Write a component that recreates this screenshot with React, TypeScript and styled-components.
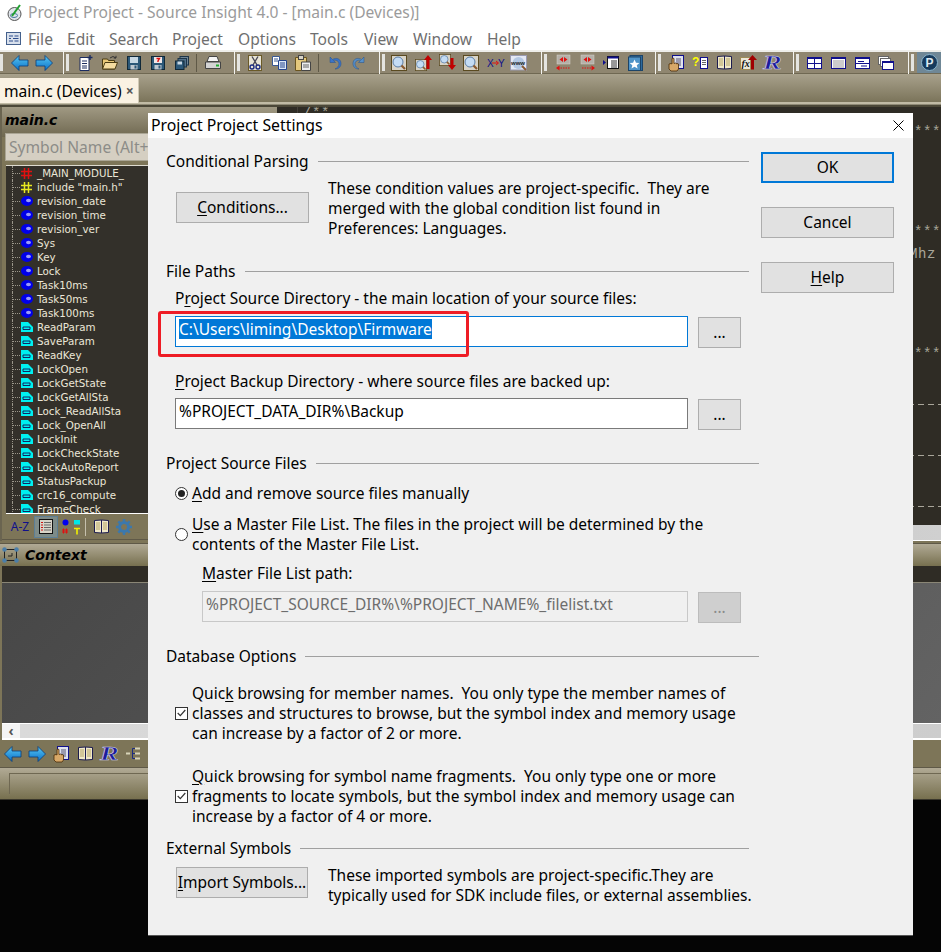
import React from "react";
import styled, { createGlobalStyle } from "styled-components";

const Global = createGlobalStyle`
  html, body { margin: 0; padding: 0; background: #050505; }
  * { box-sizing: border-box; }
`;

const UI = `"Noto Sans", "Open Sans", sans-serif`;

const Page = styled.div`
  position: relative; width: 941px; height: 952px; overflow: hidden;
  background: #050505; font-family: ${UI}; display: flex; flex-direction: column;
`;
const TitleBar = styled.div`
  height: 24px; background: #fff; display: flex; align-items: center; gap: 5px; padding: 0 0 0 7px;
  color: #9b9b9b; font-size: 15.6px; flex: none;
`;
const MenuBar = styled.div`
  height: 26px; background: #fff; display: flex; align-items: center; padding: 3px 0 0 6px; color: #6f6f6f;
  font-size: 15.6px; flex: none;
`;
const MenuItem = styled.span<{ $w: number }>`
  width: ${p => p.$w}px; flex: none;
`;
const Toolbar = styled.div`
  height: 24px; flex: none; display: flex; align-items: center; background: #8f8670;
  border-top: 2px solid #eeeeea; border-bottom: 1px solid #6f6852;
`;
const Grip = styled.span<{ $ml?: number }>`
  position: relative; flex: none; width: 3px; height: 17px; margin-left: ${p => p.$ml ?? 0}px;
  background: #e4e4e0;
  &::before { content: ""; position: absolute; left: -3px; top: -3px; bottom: -3px; width: 1px; background: #f4f4f0; }
`;
const Slot = styled.span<{ $ml?: number; $w?: number }>`
  flex: none; width: ${p => p.$w ?? 24}px; height: 20px; margin-left: ${p => p.$ml ?? 0}px;
  display: flex; align-items: center; justify-content: center;
`;
const ThinSep = styled.span<{ $ml: number }>`
  flex: none; width: 1px; height: 18px; background: #5f5947; margin-left: ${p => p.$ml}px;
`;
const PButton = styled.span`
  flex: none; width: 24px; height: 21px; margin-left: 3px; background: #6f8796; display: flex;
  align-items: center; justify-content: center;
`;
const TabStrip = styled.div`
  height: 33px; flex: none; padding-top: 4px;
  background: linear-gradient(180deg, #a8a18c 0%, #7b745a 85%, #c1bba5 86%, #c1bba5 92%, #4c4838 93%);
`;
const Tab = styled.div`
  width: 139px; height: 25px; background: #faf2e3; display: flex; align-items: center; padding-left: 4px;
  color: #000; font-size: 15.6px; gap: 4px; border-right: 1px solid #cfc8b4;
`;
const TabClose = styled.span`
  font-size: 14px; color: #555; font-weight: 700;
`;
const Upper = styled.div`
  height: 434px; flex: none; display: flex; background: #2f2c25;
`;
const SymbolPanel = styled.div`
  width: 277px; flex: none; display: flex; flex-direction: column;
  background: linear-gradient(180deg, #a09983, #6f6850 30px, #7d7558 30px);
  border-left: 2px solid #6a6450;
`;
const PanelTitle = styled.div`
  height: 26px; flex: none; padding-left: 3px; display: flex; align-items: center;
  font-family: "DejaVu Sans", sans-serif; font-weight: 700; font-style: italic; font-size: 14px; color: #000;
  gap: 5px;
`;
const SymbolSearch = styled.div`
  height: 28px; flex: none; margin-left: 3px; background: #d5cfc2; border: 1px solid #aaa594;
  color: #8c8c88; font-size: 15.6px; padding-left: 3px; display: flex; align-items: center; white-space: nowrap;
`;
const SymbolList = styled.div`
  height: 349px; flex: none; margin: 4px 0 0 4px; background: #33302a; border-top: 1px solid #dedbd0;
  border-bottom: 1px solid #fff; overflow: hidden;
`;
const SymbolRow = styled.div`
  height: 14px; display: flex; align-items: center; padding-left: 6px; flex: none;
  font-family: "DejaVu Sans", sans-serif; font-size: 10.3px; color: #ebe7d8; white-space: nowrap;
`;
const Branch = styled.span`
  flex: none; width: 9px; height: 14px; border-left: 1px dotted #9a968a;
  background: repeating-linear-gradient(90deg, #9a968a 0 1px, transparent 1px 2px) center / 100% 1px no-repeat;
`;
const SymbolIconBox = styled.span`
  flex: none; width: 16px; height: 12px; display: flex; align-items: center; justify-content: flex-start;
`;
const PanelTools = styled.div`
  height: 26px; flex: none; display: flex; align-items: center; border-bottom: 1px solid #5f5947; padding-left: 6px;
`;
const AZ = styled.span`
  width: 24px; color: #10108c; font-size: 12px; flex: none; text-align: center; margin-right: 2px;
`;
const ActiveTool = styled.span`
  width: 24px; height: 22px; background: #7d8b88; border: 1px solid #5d7f96; flex: none;
  display: flex; align-items: center; justify-content: center; margin-right: 4px;
`;
const SmallSep = styled.span`
  width: 1px; height: 18px; background: #c5c0ad; flex: none; margin: 0 4px 0 3px;
`;
const Editor = styled.div`
  flex: 1; min-width: 0; margin-left: 20px; display: flex; flex-direction: column; overflow: hidden;
  background: #2f2c25; border-left: 1px solid #44403a;
`;
const CodeLine = styled.div<{ $mt: number; $pr?: number }>`
  height: 14px; margin-top: ${p => p.$mt}px; padding-right: ${p => p.$pr ?? 0}px; display: flex; justify-content: flex-end; align-items: center;
  font-family: "Liberation Mono", monospace; font-size: 14px; color: #a9a69a; white-space: nowrap; letter-spacing: 0.6px; flex: none;
`;
const CodeStart = styled(CodeLine)`
  justify-content: flex-start; align-items: flex-start; height: 6px; line-height: 12px; overflow: hidden; padding-left: 5px;
`;
const DashLine = styled.div<{ $mt: number }>`
  height: 1px; flex: none; margin-top: ${p => p.$mt}px;
  background: repeating-linear-gradient(90deg, #a9a69a 0 6px, transparent 6px 10px);
`;
const EditorScroll = styled.div`
  height: 16px; margin-top: auto; flex: none; background: linear-gradient(90deg, #bbb, #d0d0d0); border-bottom: 1px solid #fff;
`;
const ContextBlock = styled.div`
  height: 259px; flex: none; display: flex; flex-direction: column; background: #7d7558;
`;
const ContextHeader = styled.div`
  height: 23px; flex: none; margin-top: 2px; border-top: 1px solid #5f5947; display: flex; align-items: center; gap: 6px; padding-left: 2px;
  background: linear-gradient(180deg, #b1aa95, #77704f);
  font-family: "DejaVu Sans", sans-serif; font-weight: 700; font-style: italic; font-size: 14px; color: #000;
`;
const ContextBand = styled.div`
  height: 17px; flex: none; margin-left: 2px; background: #2f2c25; border-bottom: 1px solid #8a8676;
`;
const ContextBody = styled.div`
  height: 140px; flex: none; margin-left: 2px; background: linear-gradient(135deg, #474747, #636363);
`;
const HScroll = styled.div`
  height: 17px; flex: none; margin-left: 2px; background: #fff; border-top: 1px solid #fff; border-bottom: 2px solid #fff;
  display: flex; align-items: stretch;
`;
const HScrollButton = styled.span`
  width: 18px; flex: none; background: #f4f4f4; color: #555; font-size: 14px; font-weight: 700; display: flex;
  align-items: center; justify-content: center; line-height: 1;
`;
const HScrollTrack = styled.span`
  flex: 1; background: linear-gradient(90deg, #dadada, #cdcdcd);
`;
const ContextTools = styled.div`
  height: 28px; flex: none; display: flex; align-items: center; padding-left: 1px; border-bottom: 1px solid #5f5947;
`;
const StatusBar = styled.div`
  flex: 1; background: linear-gradient(180deg, #b1aa95, #77704f); padding: 5px 0 0 9px;
  border-bottom: 1px solid #3a372c;
`;
const StatusInset = styled.div`
  height: 21px; border-left: 1px solid #6f6852; border-top: 1px solid #6f6852;
`;

/* Dialog */
const Dialog = styled.div`
  position: absolute; left: 148px; top: 113px; width: 765px; height: 823px; background: #f0f0f0;
  border-bottom: 1px solid #555; color: #000; font-size: 15.5px; line-height: 20px;
`;
const DialogTitle = styled.div`
  height: 25px; background: #fff; display: flex; align-items: center; justify-content: space-between;
  padding: 0 9px 0 3px; font-size: 15.8px;
`;
const TitleText = styled.span`
  padding-bottom: 1px;
`;
const DialogBody = styled.div`
  display: grid; grid-template-columns: 613px 133px; height: 797px;
`;
const Main = styled.div`
  padding: 13px 0 0 18px; display: flex; flex-direction: column;
`;
const Actions = styled.div`
  display: flex; flex-direction: column; gap: 24px; padding-top: 14px;
`;
const ActionButton = styled.div<{ $primary?: boolean }>`
  height: 31px; background: #e1e1e1; border: ${p => (p.$primary ? "2px solid #0078d7" : "1px solid #adadad")};
  display: flex; align-items: center; justify-content: center; padding-bottom: 2px;
`;
const GroupHead = styled.div<{ $mt: number; $lineEnd: number }>`
  display: flex; align-items: center; height: 20px; margin-top: ${p => p.$mt}px; flex: none;
  width: ${p => p.$lineEnd}px; gap: 9px; white-space: nowrap;
  &::after { content: ""; flex: 1; height: 1px; background: #a0a0a0; }
`;
const InfoRow = styled.div<{ $mt: number }>`
  display: grid; grid-template-columns: 162px 1fr; margin-top: ${p => p.$mt}px; flex: none;
`;
const PlainButton = styled.div<{ $w: number; $mt: number }>`
  width: ${p => p.$w}px; height: 31px; margin: ${p => p.$mt}px 0 0 10px; padding-bottom: 2px;
  background: #e1e1e1; border: 1px solid #adadad; display: flex; align-items: center; justify-content: center;
`;
const Para = styled.div`
  white-space: pre;
`;
const Label = styled.div<{ $mt: number; $ml: number }>`
  margin: ${p => p.$mt}px 0 0 ${p => p.$ml}px; height: 20px; flex: none; white-space: nowrap;
`;
const PathRow = styled.div<{ $mt: number; $ml: number }>`
  display: flex; margin: ${p => p.$mt}px 0 0 ${p => p.$ml}px; flex: none; gap: 10px;
`;
const PathInput = styled.div<{ $w: number; $state?: "focus" | "disabled" }>`
  width: ${p => p.$w}px; height: 31px; padding: 0 0 5px 3px; display: flex; align-items: center; white-space: nowrap;
  background: ${p => (p.$state === "disabled" ? "#f0f0f0" : "#fff")};
  color: ${p => (p.$state === "disabled" ? "#6d6d6d" : "#000")};
  border: 1px solid ${p => (p.$state === "focus" ? "#0078d7" : p.$state === "disabled" ? "#c8c8c8" : "#7a7a7a")};
`;
const Selected = styled.span`
  background: #0078d7; color: #fff; height: 20px; display: block; line-height: 20px;
`;
const BrowseButton = styled.div<{ $off?: boolean }>`
  width: 43px; height: 31px; margin-top: 1px; display: flex; align-items: center; justify-content: center; padding-bottom: 2px;
  background: ${p => (p.$off ? "#cfcfcf" : "#e1e1e1")}; border: 1px solid ${p => (p.$off ? "#bcbcbc" : "#adadad")};
  color: ${p => (p.$off ? "#8a8a8a" : "#000")};
`;
const OptionRow = styled.div<{ $mt: number }>`
  display: flex; align-items: center; margin: ${p => p.$mt}px 0 0 9px; flex: none; white-space: pre;
`;
const Radio = styled.span<{ $on?: boolean }>`
  flex: none; width: 13px; height: 13px; border-radius: 50%; border: 1px solid #333; background: #fff;
  margin-right: 4px; display: flex; align-items: center; justify-content: center;
  &::after { content: ""; width: 7px; height: 7px; border-radius: 50%; background: ${p => (p.$on ? "#222" : "transparent")}; }
`;
const Check = styled.span`
  flex: none; width: 13px; height: 13px; border: 1px solid #333; background: #fff; margin-right: 4px;
  display: flex; align-items: center; justify-content: center;
`;
const Key = styled.span`
  text-decoration: underline; text-underline-offset: 2px;
`;
const CloseX = styled.svg`
  width: 11px; height: 11px; display: block;
`;
const RedMark = styled.div`
  position: absolute; left: 158px; top: 311px; width: 311px; height: 46px; border: 3px solid #ee1c25; border-radius: 3px;
  pointer-events: none;
`;

/* Icons */
type IconName =
  | "left" | "right" | "newdoc" | "folder" | "save" | "savealert" | "saveall" | "print" | "cut" | "copy" | "paste"
  | "undo" | "redo" | "search" | "searchup" | "searchdown" | "xy" | "www" | "jumpl" | "jumpr" | "indent" | "star"
  | "hand" | "qdoc" | "book" | "fx" | "R" | "win4" | "winlines" | "winsplit" | "winstack" | "P" | "gear" | "symlist" | "kinds" | "tree" | "ctx" | "app" | "menuapp";

const Svg = styled.svg`
  display: block; flex: none; overflow: visible;
`;

const Mag = () => (
  <g>
    <rect x="0.5" y="0.5" width="15" height="15" fill="#d8d4c8" stroke="#5a4a20" />
    <circle cx="7" cy="7" r="5" fill="#c4dcf4" stroke="#5a7ea8" />
    <path d="M10.5 10.5 14 14" stroke="#8a5a30" strokeWidth="2.2" />
  </g>
);

const Icon = ({ name }: { name: IconName }) => {
  switch (name) {
    case "left":
    case "right":
      return (
        <Svg width="18" height="16" viewBox="0 0 18 16">
          <defs>
            <linearGradient id="ar" x1="0" y1="0" x2="0" y2="1">
              <stop offset="0" stopColor="#58c8f4" />
              <stop offset="1" stopColor="#0a70c8" />
            </linearGradient>
          </defs>
          <path
            d={name === "left" ? "M.5 8 8 .5V5h9v6H8v4.5Z" : "M17.5 8 10 .5V5H1v6h9v4.5Z"}
            fill="url(#ar)" stroke="#0a3c78" strokeWidth=".8"
          />
        </Svg>
      );
    case "newdoc":
      return (
        <Svg width="14" height="16" viewBox="0 0 14 16">
          <path d="M1 2.5h9v13H1z" fill="#fff" stroke="#1c2c60" />
          <path d="M3 6h5M3 8.5h5M3 11h5M3 13h5" stroke="#1c2c60" />
          <path d="M11 0v5M8.5 2.5h5" stroke="#1c2c60" strokeWidth="1.4" />
        </Svg>
      );
    case "folder":
      return (
        <Svg width="16" height="15" viewBox="0 0 16 15">
          <path d="M.5 14V4h5l1 1.5h6V14Z" fill="#e8c878" stroke="#4a3c14" />
          <path d="M.5 14 3 7.5h12.5L13 14Z" fill="#f4dca0" stroke="#4a3c14" />
          <path d="M8 3q3-3 6 0M14 3V.8M14 3h-2.2" fill="none" stroke="#333" />
        </Svg>
      );
    case "save":
    case "savealert":
      return (
        <Svg width="14" height="14" viewBox="0 0 14 14">
          <rect x=".5" y=".5" width="13" height="13" fill="#2c5878" stroke="#102838" />
          <rect x="3" y="1" width="8" height="6" fill={name === "save" ? "#c8d8e4" : "#f0e8e8"} />
          <rect x="3.5" y="9" width="7" height="4.5" fill="#c0c8d0" />
          <rect x="7.5" y="9.5" width="2" height="3" fill="#2c5878" />
          {name === "savealert" && <path d="M5.5 2.5h3L7 5v1" fill="none" stroke="#e01010" strokeWidth="1.4" />}
        </Svg>
      );
    case "saveall":
      return (
        <Svg width="14" height="14" viewBox="0 0 14 14">
          <rect x="5" y=".5" width="8.5" height="8.5" fill="#6f8494" stroke="#1c3448" />
          <rect x="3" y="2.5" width="8.5" height="8.5" fill="#50708a" stroke="#1c3448" />
          <rect x=".5" y="5" width="8.5" height="8.5" fill="#2c5878" stroke="#102838" />
          <rect x="2.5" y="5.5" width="4.5" height="3" fill="#c8d8e4" />
        </Svg>
      );
    case "print":
      return (
        <Svg width="16" height="14" viewBox="0 0 16 14">
          <path d="M4 .5h8l2 5H2Z" fill="#f4f4f4" stroke="#444" />
          <path d="M.5 6h15v6.5H.5Z" fill="#d4d4d4" stroke="#444" />
          <rect x="11" y="8.5" width="3" height="2" fill="#20b030" />
        </Svg>
      );
    case "cut":
      return (
        <Svg width="14" height="16" viewBox="0 0 14 16">
          <rect x=".5" y=".5" width="13" height="15" fill="#e8e4d4" stroke="#6a5a28" />
          <path d="M4 1.5 9 10M10 1.5 5 10" stroke="#445" strokeWidth="1.3" />
          <circle cx="4" cy="12" r="2" fill="none" stroke="#1c2c80" strokeWidth="1.4" />
          <circle cx="10" cy="12" r="2" fill="none" stroke="#1c2c80" strokeWidth="1.4" />
        </Svg>
      );
    case "copy":
      return (
        <Svg width="15" height="14" viewBox="0 0 15 14">
          <path d="M.5.5h7v9h-7z" fill="#fff" stroke="#3a5a94" />
          <path d="M2 3h4M2 5h4" stroke="#3a5a94" />
          <path d="M6.5 4.5h8v9h-8z" fill="#dce8f8" stroke="#24448c" />
          <path d="M8 7h5M8 9h5M8 11h5" stroke="#24448c" />
        </Svg>
      );
    case "paste":
      return (
        <Svg width="16" height="16" viewBox="0 0 16 16">
          <path d="M.5 2.5h11v13H.5z" fill="#e4c87c" stroke="#6a5420" />
          <rect x="3.5" y=".5" width="5" height="4" fill="#d8d4c8" stroke="#444" />
          <path d="M6.5 7h9v8.5h-9z" fill="#eee" stroke="#444" />
          <path d="M8 10h6M8 12h6" stroke="#666" />
        </Svg>
      );
    case "undo":
    case "redo":
      return (
        <Svg width="12" height="14" viewBox="0 0 12 14">
          <g transform={name === "redo" ? "translate(12 0) scale(-1 1)" : undefined}>
            <path d="M1 1v5.5h5.5L4.5 4.5C7 3.5 10 5 10 8c0 2.5-2 4-4 5 4 0 6-2.5 6-5.5C12 3 7.5 1 3.5 3.5Z" fill={name === "undo" ? "#3c74c8" : "#5890c8"} stroke="#24508c" strokeWidth=".5" />
          </g>
        </Svg>
      );
    case "search":
      return <Svg width="16" height="16" viewBox="0 0 16 16"><Mag /></Svg>;
    case "searchup":
      return (
        <Svg width="17" height="17" viewBox="0 0 17 17">
          <g transform="translate(0 5) scale(.75)"><Mag /></g>
          <path d="M13 1 17 6h-2.5v9h-3V6H9Z" fill="#c00000" />
        </Svg>
      );
    case "searchdown":
      return (
        <Svg width="17" height="17" viewBox="0 0 17 17">
          <g transform="scale(.75)"><Mag /></g>
          <path d="M13 16 17 11h-2.5V4h-3v7H9Z" fill="#c00000" />
        </Svg>
      );
    case "xy":
      return (
        <Svg width="17" height="12" viewBox="0 0 17 12">
          <text x="0" y="10" fontFamily="Liberation Sans" fontSize="10" fill="#10108c">X</text>
          <text x="11" y="10" fontFamily="Liberation Sans" fontSize="10" fill="#10108c">Y</text>
          <path d="M5 6h6M9 4l2.5 2L9 8" fill="none" stroke="#e01010" />
        </Svg>
      );
    case "www":
      return (
        <Svg width="18" height="16" viewBox="0 0 18 16">
          <rect x=".5" y=".5" width="16" height="14.5" fill="#e4e8f4" stroke="#9a9ab0" />
          <circle cx="8.5" cy="8" r="6" fill="#b4c8e4" />
          <text x="1" y="10" fontFamily="Liberation Sans" fontSize="6" fill="#222" fontWeight="700">www</text>
          <path d="M12 11 16 15" stroke="#8a5a30" strokeWidth="2" />
        </Svg>
      );
    case "jumpl":
    case "jumpr":
      return (
        <Svg width="15" height="16" viewBox="0 0 15 16">
          <rect x="1" y="0" width="13" height="9" fill="#b4b0a8" stroke="#d8d4cc" strokeWidth=".5" />
          <path d="M7 2 3.5 4.5 7 7ZM8 2l3.5 2.5L8 7Z" fill="#e01010" />
          <path d="M2 13h12" stroke="#e01010" strokeDasharray="1.5 1" />
          <path d={name === "jumpl" ? "M0 13l3.5-2.5v5Z" : "M15 13l-3.5-2.5v5Z"} fill="#e01010" />
        </Svg>
      );
    case "indent":
      return (
        <Svg width="16" height="13" viewBox="0 0 16 13">
          <path d="M0 4 3 6.5 0 9Z" fill="#10108c" />
          <rect x="4.5" y=".5" width="11" height="12" fill="#fff" stroke="#111" />
          <rect x="4.5" y=".5" width="11" height="2" fill="#10108c" />
          <path d="M8 5h6M8 7h6M8 9h6M8 11h6" stroke="#333" />
        </Svg>
      );
    case "star":
      return (
        <Svg width="15" height="16" viewBox="0 0 15 16">
          <rect x="2" y=".5" width="12.5" height="15" fill="#2e6a9c" stroke="#1c4468" />
          <rect x=".5" y="2" width="12" height="13.5" fill="#4f94c8" stroke="#1c4468" />
          <path d="M6.5 4.5 8 7.8l3.4.3-2.6 2.2.8 3.300-3.100-1.800-3 1.800.8-3.300L1.700 8.100 5.100 7.800Z" fill="#fff" />
        </Svg>
      );
    case "hand":
      return (
        <Svg width="16" height="16" viewBox="0 0 16 16">
          <rect x="4.5" y=".5" width="11" height="13" fill="#dfe2ee" stroke="#10108c" />
          <rect x="8" y="3" width="5" height="8" fill="#9a9ab0" />
          <path d="M1 9v5l2 2h6l1.5-2V9L9 8.5V9L7.5 8 6 8.5V3.5L4.5 3 4 4v5L3 8.5Z" fill="#d8a868" stroke="#4a2c08" strokeWidth=".8" />
        </Svg>
      );
    case "qdoc":
      return (
        <Svg width="16" height="13" viewBox="0 0 16 13">
          <text x="0" y="10" fontFamily="Liberation Sans" fontWeight="700" fontSize="12" fill="#ffff00">?</text>
          <rect x="8.5" y="1.5" width="7" height="11" fill="#fff" stroke="#10108c" />
          <path d="M10 4.5h4M10 6.5h4M10 8.5h4" stroke="#666" />
        </Svg>
      );
    case "book":
      return (
        <Svg width="15" height="15" viewBox="0 0 15 15">
          <path d="M.5 1.5 7.5 1l7 .5v12l-7 .5-7-.5Z" fill="#f0e8c8" stroke="#1c1c50" />
          <path d="M7.5 1v13" stroke="#1c1c50" />
          <path d="M2 4h4M2 6h4M2 8h4M2 10h4M9 4h4M9 6h4M9 8h4M9 10h4" stroke="#b4a468" />
        </Svg>
      );
    case "fx":
      return (
        <Svg width="17" height="15" viewBox="0 0 17 15">
          <rect x=".5" y="2.5" width="10" height="12" fill="#ece8d8" stroke="#a08c58" />
          <text x="1.5" y="12" fontFamily="Liberation Serif" fontStyle="italic" fontWeight="700" fontSize="10" fill="#111">fx</text>
          <path d="M12.5 0 17 5h-3v9.5h-3V5H8Z" fill="#a00000" />
        </Svg>
      );
    case "R":
      return (
        <Svg width="17" height="15" viewBox="0 0 17 15">
          <text transform="translate(-1 14) scale(1.55 1)" fontFamily="Liberation Serif" fontStyle="italic" fontWeight="700" fontSize="18" fill="#1c1c9c" stroke="#d4d4ea" strokeWidth=".5">R</text>
        </Svg>
      );
    case "win4":
      return (
        <Svg width="15" height="12" viewBox="0 0 15 12">
          <rect x=".5" y=".5" width="14" height="11" fill="#fff" stroke="#10108c" />
          <rect x=".5" y=".5" width="14" height="1.5" fill="#10108c" />
          <path d="M7.5 2v9M1 6.5h13" stroke="#10108c" />
        </Svg>
      );
    case "winlines":
      return (
        <Svg width="15" height="12" viewBox="0 0 15 12">
          <rect x=".5" y=".5" width="14" height="11" fill="#fff" stroke="#10108c" />
          <rect x=".5" y=".5" width="14" height="1.5" fill="#10108c" />
          <path d="M2 4h11M2 6h11M2 8h11M2 10h11" stroke="#999" />
        </Svg>
      );
    case "winsplit":
      return (
        <Svg width="15" height="12" viewBox="0 0 15 12">
          <rect x=".5" y=".5" width="14" height="11" fill="#fff" stroke="#10108c" />
          <rect x=".5" y=".5" width="14" height="1.5" fill="#10108c" />
          <path d="M1 6.5h13M3 4.5h6M6 9h6" stroke="#10108c" />
        </Svg>
      );
    case "winstack":
      return (
        <Svg width="16" height="14" viewBox="0 0 16 14">
          <rect x=".5" y=".5" width="10" height="8" fill="#fff" stroke="#666" />
          <rect x="2.5" y="2.5" width="10" height="8" fill="#fff" stroke="#666" />
          <rect x="4.5" y="5.5" width="11" height="8" fill="#fff" stroke="#10108c" />
          <rect x="4.5" y="5.5" width="11" height="1.5" fill="#10108c" />
        </Svg>
      );
    case "P":
      return (
        <Svg width="17" height="17" viewBox="0 0 17 17">
          <circle cx="8.5" cy="8.5" r="8" fill="#163a5c" stroke="#8ab4cc" />
          <text x="4.5" y="13" fontFamily="Liberation Sans" fontWeight="700" fontSize="12" fill="#dce8f0">P</text>
        </Svg>
      );
    case "gear":
      return (
        <Svg width="16" height="16" viewBox="0 0 16 16">
          <circle cx="8" cy="8" r="4.5" fill="none" stroke="#3c78ac" strokeWidth="3" />
          <path d="M8 0v3M8 13v3M0 8h3M13 8h3M2.3 2.3l2 2M11.7 11.7l2 2M2.3 13.7l2-2M11.7 4.3l2-2" stroke="#3c78ac" strokeWidth="2.5" />
        </Svg>
      );
    case "symlist":
      return (
        <Svg width="14" height="15" viewBox="0 0 14 15">
          <rect x=".5" y=".5" width="13" height="14" fill="#d8d4c8" stroke="#111" />
          <path d="M5 3.5h7M5 6h7M5 8.5h7M5 11h7" stroke="#666" />
          <path d="M2 3.5h2M2 6h2M2 8.5h2M2 11h2" stroke="#d01010" />
        </Svg>
      );
    case "kinds":
      return (
        <Svg width="20" height="16" viewBox="0 0 20 16">
          <circle cx="3.5" cy="3.5" r="3" fill="#0000f0" />
          <rect x="12" y="1" width="6" height="4.5" fill="#00e8e8" />
          <path d="M1.5 9.5v5M4.5 9.5v5M0 11h6M0 13h6" stroke="#e01010" />
          <path d="M12 9.5h6M15 9.5v6" stroke="#f0f000" strokeWidth="1.6" />
        </Svg>
      );
    case "tree":
      return (
        <Svg width="15" height="13" viewBox="0 0 15 13">
          <path d="M0 6.5h4M9 1.5h5M9 6.5h5M9 11.5h5" stroke="#d8d4b8" strokeWidth="2" />
          <path d="M6.5 1.5v10M6.5 1.5H9M6.5 6.5H9M6.5 11.5H9" fill="none" stroke="#1c2c80" />
        </Svg>
      );
    case "ctx":
      return (
        <Svg width="17" height="16" viewBox="0 0 17 16">
          <path d="M2.5 2.5h12v11h-12Z" fill="none" stroke="#222" />
          <path d="M6 9h4V6" fill="none" stroke="#222" />
          {[[2.5, 2.5], [14.5, 2.5], [2.5, 13.5], [14.5, 13.5]].map(([x, y]) => (
            <circle key={`${x}-${y}`} cx={x} cy={y} r="2.2" fill="#4b7ea8" />
          ))}
        </Svg>
      );
    case "app":
      return (
        <Svg width="16" height="17" viewBox="0 0 16 17">
          <circle cx="7.5" cy="10" r="6.5" fill="#dfe4ea" stroke="#555" />
          <ellipse cx="7" cy="11.5" rx="3.5" ry="2" fill="none" stroke="#4878a0" />
          <path d="M5 12 13 1" stroke="#20a030" strokeWidth="2" />
        </Svg>
      );
    case "menuapp":
      return (
        <Svg width="15" height="13" viewBox="0 0 15 13">
          <rect x=".5" y=".5" width="14" height="12" fill="#d8e0ec" stroke="#44608c" />
          <path d="M3 4h4M3 6.5h2M3 9h4M8.5 4h4M7 6.5h5.5M8.5 9h4" stroke="#2c4c8c" />
        </Svg>
      );
  }
};

const SymHash = ({ c }: { c: string }) => (
  <Svg width="11" height="11" viewBox="0 0 11 11">
    <path d="M3.5 0v11M7.5 0v11M0 3.5h11M0 7.5h11" stroke={c} strokeWidth="1.5" />
  </Svg>
);
const SymBall = () => (
  <Svg width="12" height="10" viewBox="0 0 12 10">
    <ellipse cx="6" cy="5" rx="6" ry="5" fill="#0000e8" />
    <ellipse cx="7.5" cy="4.5" rx="2.5" ry="1.8" fill="#9a9af8" />
  </Svg>
);
const SymFunc = () => (
  <Svg width="12" height="10" viewBox="0 0 12 10">
    <path d="M0 0h7l5 5v5H0Z" fill="#00f0f0" />
    <path d="M2 5h7v2.5H2Z" fill="none" stroke="#115" strokeWidth=".9" />
  </Svg>
);
const CheckMark = () => (
  <Svg width="9" height="8" viewBox="0 0 9 8">
    <path d="M.7 4 3.3 6.6 8.3 1" fill="none" stroke="#333" strokeWidth="1.2" />
  </Svg>
);

type Sym = [string, "red" | "yel" | "ball" | "func"];
const symbols: Sym[] = [
  ["_MAIN_MODULE_", "red"], ['include "main.h"', "yel"], ["revision_date", "ball"], ["revision_time", "ball"],
  ["revision_ver", "ball"], ["Sys", "ball"], ["Key", "ball"], ["Lock", "ball"], ["Task10ms", "ball"], ["Task50ms", "ball"],
  ["Task100ms", "ball"], ["ReadParam", "func"], ["SaveParam", "func"], ["ReadKey", "func"], ["LockOpen", "func"],
  ["LockGetState", "func"], ["LockGetAllSta", "func"], ["Lock_ReadAllSta", "func"], ["Lock_OpenAll", "func"], ["LockInit", "func"],
  ["LockCheckState", "func"], ["LockAutoReport", "func"], ["StatusPackup", "func"], ["crc16_compute", "func"], ["FrameCheck", "func"],
];

const menus: [string, number][] = [
  ["File", 39], ["Edit", 42], ["Search", 63], ["Project", 66], ["Options", 72], ["Tools", 54], ["View", 49], ["Window", 74], ["Help", 40],
];

export default function App() {
  return (
    <Page>
      <Global />
      <TitleBar>
        <Icon name="app" />
        <span>Project Project - Source Insight 4.0 - [main.c (Devices)]</span>
      </TitleBar>
      <MenuBar>
        <MenuItem $w={22}><Icon name="menuapp" /></MenuItem>
        {menus.map(([m, w]) => <MenuItem key={m} $w={w}>{m}</MenuItem>)}
      </MenuBar>
      <Toolbar>
        <Grip />
        <Slot $ml={5}><Icon name="left" /></Slot>
        <Slot><Icon name="right" /></Slot>
        <Grip $ml={10} />
        <Slot $ml={5}><Icon name="newdoc" /></Slot>
        <Slot><Icon name="folder" /></Slot>
        <Slot><Icon name="save" /></Slot>
        <Slot><Icon name="savealert" /></Slot>
        <Slot><Icon name="saveall" /></Slot>
        <ThinSep $ml={2} />
        <Slot $ml={4}><Icon name="print" /></Slot>
        <Grip $ml={12} />
        <Slot $ml={3}><Icon name="cut" /></Slot>
        <Slot><Icon name="copy" /></Slot>
        <Slot><Icon name="paste" /></Slot>
        <ThinSep $ml={3} />
        <Slot $ml={4}><Icon name="undo" /></Slot>
        <Slot><Icon name="redo" /></Slot>
        <Grip $ml={11} />
        <Slot $ml={2}><Icon name="search" /></Slot>
        <Slot><Icon name="searchup" /></Slot>
        <Slot><Icon name="searchdown" /></Slot>
        <Slot><Icon name="search" /></Slot>
        <Slot><Icon name="xy" /></Slot>
        <Slot><Icon name="www" /></Slot>
        <Grip $ml={13} />
        <Slot $ml={4}><Icon name="jumpl" /></Slot>
        <Slot><Icon name="jumpr" /></Slot>
        <Slot><Icon name="indent" /></Slot>
        <Slot><Icon name="star" /></Slot>
        <Grip $ml={11} />
        <Slot $ml={3}><Icon name="hand" /></Slot>
        <Slot><Icon name="qdoc" /></Slot>
        <Slot><Icon name="book" /></Slot>
        <Slot><Icon name="fx" /></Slot>
        <Slot><Icon name="R" /></Slot>
        <Grip $ml={12} />
        <Slot $ml={3}><Icon name="win4" /></Slot>
        <Slot><Icon name="winlines" /></Slot>
        <Slot><Icon name="winsplit" /></Slot>
        <Slot><Icon name="winstack" /></Slot>
        <Grip $ml={13} />
        <PButton><Icon name="P" /></PButton>
      </Toolbar>
      <TabStrip>
        <Tab>main.c (Devices) <TabClose>×</TabClose></Tab>
      </TabStrip>
      <Upper>
        <SymbolPanel>
          <PanelTitle>main.c</PanelTitle>
          <SymbolSearch>Symbol Name (Alt+L)</SymbolSearch>
          <SymbolList>
            {symbols.map(([s, k]) => (
              <SymbolRow key={s}>
                <Branch />
                <SymbolIconBox>
                  {k === "red" && <SymHash c="#e01010" />}
                  {k === "yel" && <SymHash c="#e8e820" />}
                  {k === "ball" && <SymBall />}
                  {k === "func" && <SymFunc />}
                </SymbolIconBox>
                {s}
              </SymbolRow>
            ))}
          </SymbolList>
          <PanelTools>
            <AZ>A-Z</AZ>
            <ActiveTool><Icon name="symlist" /></ActiveTool>
            <Icon name="kinds" />
            <SmallSep />
            <Slot $w={22}><Icon name="book" /></Slot>
            <Slot $w={24}><Icon name="gear" /></Slot>
          </PanelTools>
        </SymbolPanel>
        <Editor>
          <CodeStart $mt={0}>/**</CodeStart>
          <CodeLine $mt={12}>******</CodeLine>
          <CodeLine $mt={86}>******</CodeLine>
          <CodeLine $mt={8} $pr={5}>Mhz</CodeLine>
          <CodeLine $mt={86}>******</CodeLine>
          <DashLine $mt={43} />
          <DashLine $mt={50} />
          <DashLine $mt={50} />
          <EditorScroll />
        </Editor>
      </Upper>
      <ContextBlock>
        <ContextHeader><Icon name="ctx" />Context</ContextHeader>
        <ContextBand />
        <ContextBody />
        <HScroll>
          <HScrollButton>‹</HScrollButton>
          <HScrollTrack />
        </HScroll>
        <ContextTools>
          <Slot><Icon name="left" /></Slot>
          <Slot><Icon name="right" /></Slot>
          <Slot><Icon name="hand" /></Slot>
          <Slot><Icon name="book" /></Slot>
          <Slot><Icon name="R" /></Slot>
          <Slot><Icon name="tree" /></Slot>
        </ContextTools>
        <StatusBar><StatusInset /></StatusBar>
      </ContextBlock>

      <Dialog>
        <DialogTitle>
          <TitleText>Project Project Settings</TitleText>
          <CloseX viewBox="0 0 11 11"><path d="M.5.5l10 10M10.5.5l-10 10" stroke="#000" /></CloseX>
        </DialogTitle>
        <DialogBody>
          <Main>
            <GroupHead $mt={0} $lineEnd={583}>Conditional Parsing</GroupHead>
            <InfoRow $mt={7}>
              <PlainButton $w={133} $mt={14}><span><Key>C</Key>onditions...</span></PlainButton>
              <Para>
                These condition values are project-specific.  They are<br />
                merged with the global condition list found in<br />
                Preferences: Languages.
              </Para>
            </InfoRow>
            <GroupHead $mt={23} $lineEnd={583}>File Paths</GroupHead>
            <Label $mt={7} $ml={9}>P<Key>r</Key>oject Source Directory - the main location of your source files:</Label>
            <PathRow $mt={8} $ml={9}>
              <PathInput $w={513} $state="focus"><Selected>C:\Users\liming\Desktop\Firmware</Selected></PathInput>
              <BrowseButton>...</BrowseButton>
            </PathRow>
            <Label $mt={23} $ml={9}><Key>P</Key>roject Backup Directory - where source files are backed up:</Label>
            <PathRow $mt={7} $ml={9}>
              <PathInput $w={513}>%PROJECT_DATA_DIR%\Backup</PathInput>
              <BrowseButton>...</BrowseButton>
            </PathRow>
            <GroupHead $mt={23} $lineEnd={593}>Project Source Files</GroupHead>
            <OptionRow $mt={10}>
              <Radio $on />
              <span><Key>A</Key>dd and remove source files manually</span>
            </OptionRow>
            <OptionRow $mt={11}>
              <Radio />
              <span>
                <Key>U</Key>se a Master File List. The files in the project will be determined by the<br />
                contents of the Master File List.
              </span>
            </OptionRow>
            <Label $mt={9} $ml={36}><Key>M</Key>aster File List path:</Label>
            <PathRow $mt={8} $ml={36}>
              <PathInput $w={486} $state="disabled">%PROJECT_SOURCE_DIR%\%PROJECT_NAME%_filelist.txt</PathInput>
              <BrowseButton $off>...</BrowseButton>
            </PathRow>
            <GroupHead $mt={23} $lineEnd={593}>Database Options</GroupHead>
            <OptionRow $mt={17}>
              <Check><CheckMark /></Check>
              <span>
                Quic<Key>k</Key> browsing for member names.  You only type the member names of<br />
                classes and structures to browse, but the symbol index and memory usage<br />
                can increase by a factor of 2 or more.
              </span>
            </OptionRow>
            <OptionRow $mt={23}>
              <Check><CheckMark /></Check>
              <span>
                <Key>Q</Key>uick browsing for symbol name fragments.  You only type one or more<br />
                fragments to locate symbols, but the symbol index and memory usage can<br />
                increase by a factor of 4 or more.
              </span>
            </OptionRow>
            <GroupHead $mt={12} $lineEnd={583}>External Symbols</GroupHead>
            <InfoRow $mt={7}>
              <PlainButton $w={132} $mt={2}><span><Key>I</Key>mport Symbols...</span></PlainButton>
              <Para>
                These imported symbols are project-specific.They are<br />
                typically used for SDK include files, or external assemblies.
              </Para>
            </InfoRow>
          </Main>
          <Actions>
            <ActionButton $primary>OK</ActionButton>
            <ActionButton>Cancel</ActionButton>
            <ActionButton><span><Key>H</Key>elp</span></ActionButton>
          </Actions>
        </DialogBody>
      </Dialog>
      <RedMark />
    </Page>
  );
}
